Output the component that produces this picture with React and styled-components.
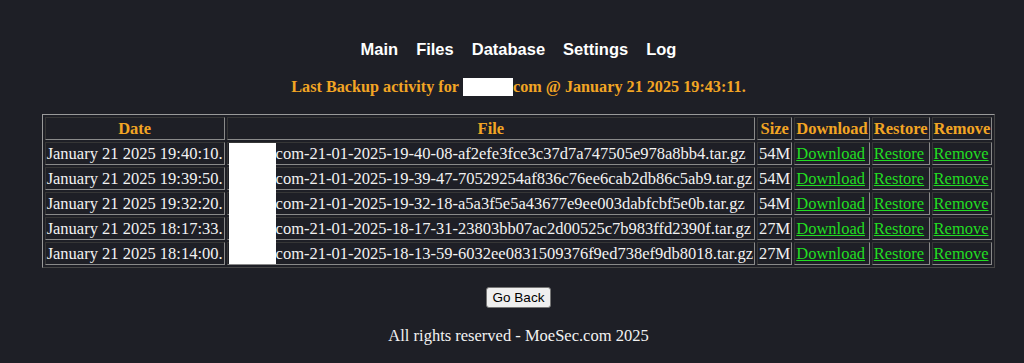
import React from "react";
import styled, { createGlobalStyle } from "styled-components";

const Global = createGlobalStyle`
  html, body { margin: 0; padding: 0; background: #1e1f26; }
  body { font-family: "Liberation Serif", "Times New Roman", serif; color: #f2f2f2; }
`;

const Page = styled.div`
  display: flex;
  flex-direction: column;
  align-items: center;
  padding: 38px 0 0 13px;
`;

const Nav = styled.nav`
  display: flex;
  gap: 18px;
  font-family: "Liberation Sans", Arial, sans-serif;
  font-weight: bold;
  font-size: 16.5px;
  line-height: 22px;
`;

const NavLink = styled.a`
  color: #ffffff;
  text-decoration: none;
`;

const Title = styled.h3`
  margin: 17px 0 0;
  font-size: 16.2px;
  line-height: 20px;
  font-weight: bold;
  color: #f2a524;
  display: flex;
  align-items: center;
`;

const TitleRedact = styled.span`
  display: inline-block;
  width: 50px;
  height: 18px;
  background: #ffffff;
  margin-left: 4px;
`;

const Table = styled.table`
  margin-top: 17px;
  border: 1px outset #9a9a9a;
  border-spacing: 2px;
  font-size: 16.5px;
  line-height: 19px;
`;

const Th = styled.th`
  border: 1px inset #8a8a8a;
  padding: 1px;
  color: #f2a524;
  font-weight: bold;
  white-space: nowrap;
`;

const Td = styled.td`
  border: 1px inset #8a8a8a;
  padding: 1px;
  color: #f2f2f2;
  white-space: nowrap;
  position: relative;
`;

const Redact = styled.span`
  display: inline-block;
  width: 47px;
  height: 1px;
  vertical-align: top;
  &::after {
    content: "";
    position: absolute;
    z-index: 2;
    left: 1px;
    width: 47px;
    top: 0;
    bottom: ${(p) => (p.$last ? "0" : "-5px")};
    background: #ffffff;
  }
`;

const Link = styled.a`
  color: #22dd22;
  text-decoration: underline;
  cursor: pointer;
`;

const Button = styled.button`
  margin-top: 19px;
  font-family: "Liberation Sans", Arial, sans-serif;
  font-size: 13.5px;
  padding: 1px 6px;
  height: 21px;
  background: #efefef;
  color: #000;
  border: 1px solid #767676;
  border-radius: 3px;
`;

const Footer = styled.p`
  margin: 18px 0 0;
  font-size: 16.5px;
  line-height: 20px;
  color: #f2f2f2;
`;

const rows = [
  ["January 21 2025 19:40:10.", "com-21-01-2025-19-40-08-af2efe3fce3c37d7a747505e978a8bb4.tar.gz", "54M"],
  ["January 21 2025 19:39:50.", "com-21-01-2025-19-39-47-70529254af836c76ee6cab2db86c5ab9.tar.gz", "54M"],
  ["January 21 2025 19:32:20.", "com-21-01-2025-19-32-18-a5a3f5e5a43677e9ee003dabfcbf5e0b.tar.gz", "54M"],
  ["January 21 2025 18:17:33.", "com-21-01-2025-18-17-31-23803bb07ac2d00525c7b983ffd2390f.tar.gz", "27M"],
  ["January 21 2025 18:14:00.", "com-21-01-2025-18-13-59-6032ee0831509376f9ed738ef9db8018.tar.gz", "27M"],
];

export default function App() {
  return (
    <>
      <Global />
      <Page>
        <Nav>
          <NavLink href="#">Main</NavLink>
          <NavLink href="#">Files</NavLink>
          <NavLink href="#">Database</NavLink>
          <NavLink href="#">Settings</NavLink>
          <NavLink href="#">Log</NavLink>
        </Nav>
        <Title>
          Last Backup activity for<TitleRedact />com @ January 21 2025 19:43:11.
        </Title>
        <Table>
          <thead>
            <tr>
              <Th>Date</Th>
              <Th>File</Th>
              <Th>Size</Th>
              <Th>Download</Th>
              <Th>Restore</Th>
              <Th>Remove</Th>
            </tr>
          </thead>
          <tbody>
            {rows.map((r, i) => (
              <tr key={i}>
                <Td>{r[0]}</Td>
                <Td>
                  <Redact $last={i === rows.length - 1} />
                  {r[1]}
                </Td>
                <Td>{r[2]}</Td>
                <Td><Link>Download</Link></Td>
                <Td><Link>Restore</Link></Td>
                <Td><Link>Remove</Link></Td>
              </tr>
            ))}
          </tbody>
        </Table>
        <Button>Go Back</Button>
        <Footer>All rights reserved - MoeSec.com 2025</Footer>
      </Page>
    </>
  );
}
